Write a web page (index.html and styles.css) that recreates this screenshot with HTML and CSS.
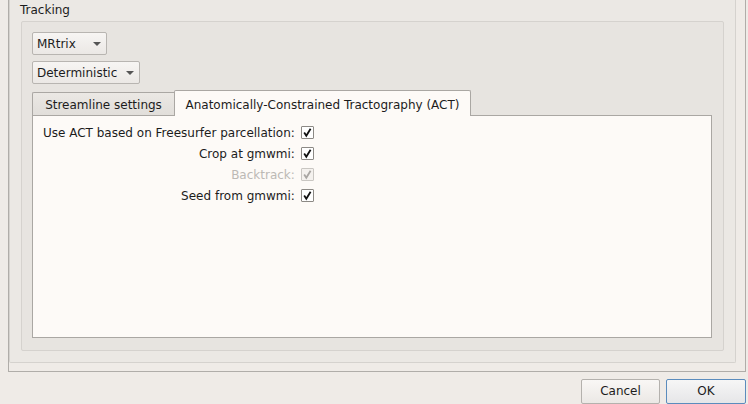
FILE: index.html
```html
<!DOCTYPE html>
<html>
<head>
<meta charset="utf-8">
<link rel="stylesheet" href="styles.css">
</head>
<body>
<div class="scroll">
  <div class="outer">
    <div class="gtitle">Tracking</div>
    <div class="group">
      <div class="combo w1"><span>MRtrix</span><span class="arrow"></span></div>
      <div class="combo w2"><span>Deterministic</span><span class="arrow"></span></div>
      <div class="tabwidget">
        <div class="tabbar">
          <div class="tab">Streamline settings</div>
          <div class="tab active">Anatomically-Constrained Tractography (ACT)</div>
        </div>
        <div class="pane">
          <div class="form">
            <span class="lbl">Use ACT based on Freesurfer parcellation:</span>
            <span class="cb"><svg viewBox="0 0 11 11" width="11" height="11"><path d="M2.2 5.6 L4.3 8.8 L8.6 1.8" /></svg></span>
            <span class="lbl">Crop at gmwmi:</span>
            <span class="cb"><svg viewBox="0 0 11 11" width="11" height="11"><path d="M2.2 5.6 L4.3 8.8 L8.6 1.8" /></svg></span>
            <span class="lbl disabled">Backtrack:</span>
            <span class="cb disabled"><svg viewBox="0 0 11 11" width="11" height="11"><path d="M2.2 5.6 L4.3 8.8 L8.6 1.8" /></svg></span>
            <span class="lbl">Seed from gmwmi:</span>
            <span class="cb"><svg viewBox="0 0 11 11" width="11" height="11"><path d="M2.2 5.6 L4.3 8.8 L8.6 1.8" /></svg></span>
          </div>
        </div>
      </div>
    </div>
  </div>
</div>
<div class="buttons">
  <button class="btn cancel">Cancel</button>
  <button class="btn default">OK</button>
</div>
</body>
</html>
```

FILE: styles.css
```css
html, body {
  margin: 0;
  padding: 0;
}
body {
  width: 748px;
  height: 404px;
  overflow: hidden;
  background: #efebe7;
  font-family: "DejaVu Sans", sans-serif;
  font-size: 12px;
  line-height: 14px;
  color: #1c1c1c;
}
.scroll {
  box-sizing: border-box;
  margin-left: 8px;
  width: 738px;
  height: 372px;
  border: 1px solid #b0ada9;
  border-top: none;
  overflow: hidden;
  background: #efebe7;
}
.outer {
  box-sizing: border-box;
  width: 727px;
  height: 363px;
  border: 1px solid #d5d2ce;
  border-top: none;
  border-radius: 0 0 2px 2px;
  background: #ebe8e4;
}
.gtitle {
  padding: 3px 0 0 10px;
  height: 14px;
}
.group {
  box-sizing: border-box;
  margin: 4px 0 0 11px;
  width: 703px;
  height: 330px;
  border: 1px solid #d5d2ce;
  border-radius: 2px;
  background: #e7e4e0;
  padding: 10px 0 0 10px;
}
.combo {
  box-sizing: border-box;
  height: 23px;
  display: flex;
  align-items: center;
  justify-content: space-between;
  padding: 0 5px 0 4px;
  border: 1px solid #b8b5b1;
  border-radius: 2px;
  background: linear-gradient(#f7f5f3, #ebe8e5);
}
.combo.w1 {
  width: 75px;
  margin-bottom: 6px;
}
.combo.w2 {
  width: 108px;
}
.arrow {
  width: 0;
  height: 0;
  border-left: 4px solid transparent;
  border-right: 4px solid transparent;
  border-top: 4px solid #555;
}
.tabwidget {
  margin-top: 6px;
  width: 680px;
}
.tabbar {
  display: flex;
  align-items: flex-end;
  height: 25px;
}
.tab {
  box-sizing: border-box;
  height: 23px;
  width: 142px;
  border: 1px solid #aaa7a3;
  border-bottom: none;
  border-right: none;
  border-radius: 2px 0 0 0;
  background: linear-gradient(#ebe8e4, #e1deda);
  text-align: center;
  padding-top: 5px;
  white-space: nowrap;
}
.tab.active {
  height: 26px;
  width: 297px;
  margin-bottom: -1px;
  border-right: 1px solid #aaa7a3;
  border-radius: 2px 2px 0 0;
  background: #fdfaf7;
  padding-top: 7px;
  position: relative;
  z-index: 1;
}
.pane {
  box-sizing: border-box;
  height: 223px;
  border: 1px solid #aaa7a3;
  background: #fdfaf7;
  padding: 6px 0 0 10px;
}
.form {
  display: grid;
  grid-template-columns: max-content 13px;
  grid-auto-rows: 21px;
  column-gap: 6px;
  align-items: center;
}
.lbl {
  justify-self: end;
  white-space: nowrap;
}
.lbl.disabled {
  color: #bcb9b5;
}
.cb {
  box-sizing: border-box;
  width: 13px;
  height: 13px;
  border: 1px solid #8c8985;
  border-radius: 1px;
  background: #ffffff;
  display: flex;
  align-items: center;
  justify-content: center;
}
.cb svg path {
  fill: none;
  stroke: #111;
  stroke-width: 1.8;
}
.cb.disabled {
  border-color: #c9c6c2;
  background: #f4f1ee;
}
.cb.disabled svg path {
  stroke: #a9a6a3;
}
.buttons {
  display: flex;
  justify-content: flex-end;
  gap: 6px;
  padding: 7px 2px 0 0;
}
.btn {
  box-sizing: border-box;
  height: 25px;
  width: 79px;
  padding: 0;
  margin: 0;
  font-family: inherit;
  font-size: 12px;
  line-height: 23px;
  color: #1c1c1c;
  border: 1px solid #b4b1ad;
  border-radius: 2px;
  background: linear-gradient(#f9f7f5, #ebe8e5);
}
.btn.default {
  width: 80px;
  border-color: #5b8cbd;
  background: linear-gradient(#f6f6f6, #e6e6e8);
}
```
